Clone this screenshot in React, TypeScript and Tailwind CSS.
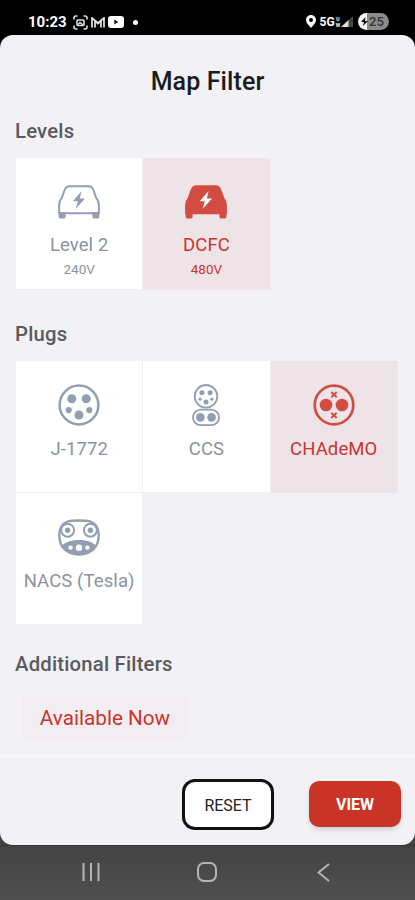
import React from "react";
import clsx from "clsx";

const CarIcon = ({ filled }: { filled?: boolean }) => (
  <svg width="42" height="34" viewBox="0 0 42 34">
    <path
      d="M6.6 5C7.6 2.4 9 1.2 11.5 1.2H30.5C33 1.2 34.4 2.4 35.4 5L38.2 12.8C40 14.8 40.9 16.6 40.9 20V28.2H1.1V20C1.1 16.6 2 14.8 3.8 12.8Z"
      fill={filled ? "currentColor" : "none"}
      stroke="currentColor"
      strokeWidth="2"
      strokeLinejoin="round"
    />
    <path
      d="M0.6 27H7.6V31.4C7.6 32.8 6.8 33.6 5.4 33.6H2.8C1.4 33.6 0.6 32.8 0.6 31.4ZM34.4 27H41.4V31.4C41.4 32.8 40.6 33.6 39.2 33.6H36.6C35.2 33.6 34.4 32.8 34.4 31.4Z"
      fill="currentColor"
    />
    <path
      d="M23.6 6L14.8 16.2H19.8L17.6 24L27 13.4H21.8Z"
      fill={filled ? "#fff" : "currentColor"}
    />
  </svg>
);

const J1772Icon = () => (
  <svg width="42" height="42" viewBox="0 0 42 42" fill="currentColor">
    <circle cx="21" cy="21" r="19.4" fill="none" stroke="currentColor" strokeWidth="2.5" />
    <circle cx="13.8" cy="14.8" r="4.5" />
    <circle cx="28.2" cy="14.8" r="4.5" />
    <circle cx="10.7" cy="26.1" r="3.1" />
    <circle cx="31.3" cy="26.1" r="3.1" />
    <circle cx="21" cy="31" r="4.5" />
  </svg>
);

const CcsIcon = () => (
  <svg width="28" height="42" viewBox="0 0 28 42" fill="currentColor">
    <g fill="none" stroke="currentColor" strokeWidth="1.8">
      <circle cx="14" cy="12.3" r="11.3" />
      <rect x="1" y="25.7" width="26" height="15.4" rx="7.7" />
    </g>
    <circle cx="9.9" cy="8.8" r="2.5" />
    <circle cx="18.1" cy="8.8" r="2.5" />
    <circle cx="8.1" cy="15.2" r="1.6" />
    <circle cx="19.9" cy="15.2" r="1.6" />
    <circle cx="14" cy="18.1" r="2.5" />
    <circle cx="8.4" cy="33.4" r="4.3" />
    <circle cx="19.6" cy="33.4" r="4.3" />
  </svg>
);

const ChademoIcon = () => (
  <svg width="42" height="42" viewBox="0 0 42 42" fill="currentColor">
    <circle cx="21" cy="21" r="19.3" fill="none" stroke="currentColor" strokeWidth="2.7" />
    <circle cx="13" cy="21" r="6.3" />
    <circle cx="29" cy="21" r="6.3" />
    <path
      d="M18.3 8L23.7 13.2M23.7 8L18.3 13.2M18.3 28.8L23.7 34M23.7 28.8L18.3 34"
      stroke="currentColor"
      strokeWidth="1.9"
    />
  </svg>
);

const NacsIcon = () => (
  <svg width="42" height="37" viewBox="0 0 42 37" fill="currentColor">
    <path
      d="M9.5 2.5C13 1.1 29 1.1 32.5 2.5C37.5 4.5 40.7 9.5 40.7 16C40.7 28 33.5 35.5 21 35.5S1.3 28 1.3 16C1.3 9.5 4.5 4.5 9.5 2.5Z"
      fill="none"
      stroke="currentColor"
      strokeWidth="2.4"
    />
    <g fill="none" stroke="currentColor" strokeWidth="2">
      <circle cx="9.6" cy="11.2" r="6.5" />
      <circle cx="32.4" cy="11.2" r="6.5" />
    </g>
    <circle cx="9.6" cy="11.2" r="2.7" />
    <circle cx="32.4" cy="11.2" r="2.7" />
    <path d="M4 26.5C12 19.3 30 19.3 38 26.5C34.5 33 28.5 36 21 36S7.5 33 4 26.5Z" />
    <g fill="#fff">
      <circle cx="12.6" cy="28.6" r="2.2" />
      <circle cx="21" cy="28.8" r="3.2" />
      <circle cx="29.4" cy="28.6" r="2.2" />
    </g>
  </svg>
);

type TileProps = {
  icon: React.ReactNode;
  label: string;
  sub?: string;
  selected?: boolean;
};

const Tile = ({ icon, label, sub, selected }: TileProps) => (
  <button
    className={clsx(
      "h-[132px] w-[127.3px] flex flex-col items-center border-r border-b",
      selected ? "border-[#eee6ea] bg-[#eee4e8] text-[#c9352d]" : "border-[#f0eff3] bg-white text-[#8b93a1]"
    )}
  >
    <span
      className={clsx(
        "mt-[23px] h-[42px] flex items-center",
        selected ? "text-[#d24c42]" : "text-[#929fb3]"
      )}
    >
      {icon}
    </span>
    <span
      className={clsx(
        "text-[18.5px] leading-6 tracking-[0.1px] whitespace-nowrap",
        sub ? "mt-2.5" : "mt-[11px]"
      )}
    >
      {label}
    </span>
    {sub && <span className="text-[13.5px] leading-6">{sub}</span>}
  </button>
);

const StatusBar = () => (
  <div className="h-[35px] shrink-0 pt-[9px] pl-7 pr-[26px] flex justify-between text-white">
    <div className="h-[26px] flex items-center">
      <span className="w-[40px] text-[15px] font-bold leading-none">10:23</span>
      <svg className="ml-[5px]" width="15" height="15" viewBox="0 0 15 15" fill="none" stroke="#ddd" strokeWidth="1.6">
        <path d="M1 4.5V3Q1 1 3 1H4.5M10.5 1H12Q14 1 14 3V4.5M14 10.5V12Q14 14 12 14H10.5M4.5 14H3Q1 14 1 12V10.5" />
        <rect x="4" y="5" width="7" height="5.5" rx="1" />
        <path d="M5 9.5L7 7.5L10 10" />
      </svg>
      <svg className="ml-[3px]" width="14" height="11" viewBox="0 0 14 11" fill="none" stroke="#ddd" strokeWidth="1.8">
        <path d="M1 10.5V1L7 6L13 1V10.5M4 10.5V4L7 6.5L10 4V10.5" />
      </svg>
      <svg className="ml-[3px]" width="16" height="12" viewBox="0 0 16 12">
        <rect width="16" height="12" rx="3" fill="#fff" />
        <path d="M6.3 3.6L10.3 6L6.3 8.4Z" fill="#111" />
      </svg>
      <span className="ml-[9px] size-[5px] rounded-full bg-white" />
    </div>

    <div className="h-[26px] flex items-center pb-px">
      <svg width="10" height="13" viewBox="0 0 10 13">
        <path
          d="M5 0C2.2 0 0 2.2 0 5C0 8 3 10.5 5 13C7 10.5 10 8 10 5C10 2.2 7.8 0 5 0ZM5 3A2 2 0 1 1 5 7A2 2 0 0 1 5 3Z"
          fill="#fff"
        />
      </svg>
      <span className="ml-1 text-[12px] font-bold leading-none">5G</span>
      <span className="ml-px flex flex-col items-center text-[5px] leading-[6px] font-bold">
        <span>U</span>
        <span>W</span>
      </span>
      <svg className="ml-px" width="12" height="11" viewBox="0 0 12 11">
        <path d="M12 0V11H0Z" fill="#444" />
        <path d="M7.5 4V11H0Z" fill="#ddd" />
      </svg>
      <span className="ml-[5px] h-[17px] w-[31px] rounded-full bg-linear-to-r from-[#f5f5f5] from-28% to-[#8b8b8b] to-28% flex items-center pl-[3px]">
        <svg width="7" height="9" viewBox="0 0 7 9">
          <path d="M4.5 0L0 5H3L2 9L7 4H4Z" fill="#111" />
        </svg>
        <span className="ml-px text-[13px] leading-none font-medium text-[#333]">25</span>
      </span>
    </div>
  </div>
);

const Heading = ({ children }: { children: React.ReactNode }) => (
  <h2 className="text-[20.3px] leading-6 font-medium tracking-[0.2px] text-[#5a5a60]">{children}</h2>
);

const App = () => {
  return (
    <div className="h-[900px] w-[415px] flex flex-col bg-[linear-gradient(#000_0_400px,#434343_400px)] font-['Roboto',sans-serif]">
      <StatusBar />

      <div className="h-[810px] shrink-0 flex flex-col rounded-[13px] bg-[#f2f1f6]">
        <h1 className="pt-[31px] text-center text-[25px] leading-8 font-medium tracking-[0.1px] text-[#1c1c1f]">Map Filter</h1>

        <div className="pt-[21px] pl-[15px]">
          <Heading>Levels</Heading>
          <div className="mt-[15px] pl-px flex">
            <Tile icon={<CarIcon />} label="Level 2" sub="240V" />
            <Tile icon={<CarIcon filled />} label="DCFC" sub="480V" selected />
          </div>

          <div className="mt-8">
            <Heading>Plugs</Heading>
          </div>
          <div className="mt-[15px] pl-px flex flex-wrap">
            <Tile icon={<J1772Icon />} label="J-1772" />
            <Tile icon={<CcsIcon />} label="CCS" />
            <Tile icon={<ChademoIcon />} label="CHAdeMO" selected />
            <Tile icon={<NacsIcon />} label="NACS (Tesla)" />
          </div>

          <div className="mt-[27px]">
            <Heading>Additional Filters</Heading>
          </div>
          <button className="mt-5 ml-[7px] h-[44px] w-[166px] rounded bg-[#f2edf1] pt-0.5 text-[20.7px] text-[#c9352d]">
            Available Now
          </button>
        </div>

        {/* Footer actions */}
        <div className="mt-auto h-[89px] shrink-0 border-t border-[#f7f6fa] pt-[22px] pr-[14px] flex justify-end gap-[35px]">
          <button className="h-[51px] w-[92px] rounded-[13px] border-[3.5px] border-[#111] bg-white pt-0.5 text-[16px] text-[#222]">
            RESET
          </button>
          <button className="mt-0.5 h-[46px] w-[92px] rounded-[10px] bg-[#ca3427] pt-0.5 text-[16px] font-bold text-white shadow-md">
            VIEW
          </button>
        </div>
      </div>

      {/* System navigation */}
      <div className="h-[55px] shrink-0 flex items-center justify-center gap-[97px] border-t border-[#363636] bg-linear-to-b from-[#434343] to-[#505050] pb-0.5">
        <svg width="18" height="18" viewBox="0 0 18 18" stroke="#b5b5b5" strokeWidth="2">
          <path d="M1.5 0V18M9 0V18M16.5 0V18" />
        </svg>
        <svg width="20" height="20" viewBox="0 0 20 20" fill="none" stroke="#b5b5b5" strokeWidth="2">
          <rect x="1" y="1" width="18" height="18" rx="6" />
        </svg>
        <svg width="19" height="19" viewBox="-3 0 19 19" fill="none" stroke="#b5b5b5" strokeWidth="2">
          <path d="M12 1L1.5 9.5L12 18" />
        </svg>
      </div>
    </div>
  );
};

export default App;
